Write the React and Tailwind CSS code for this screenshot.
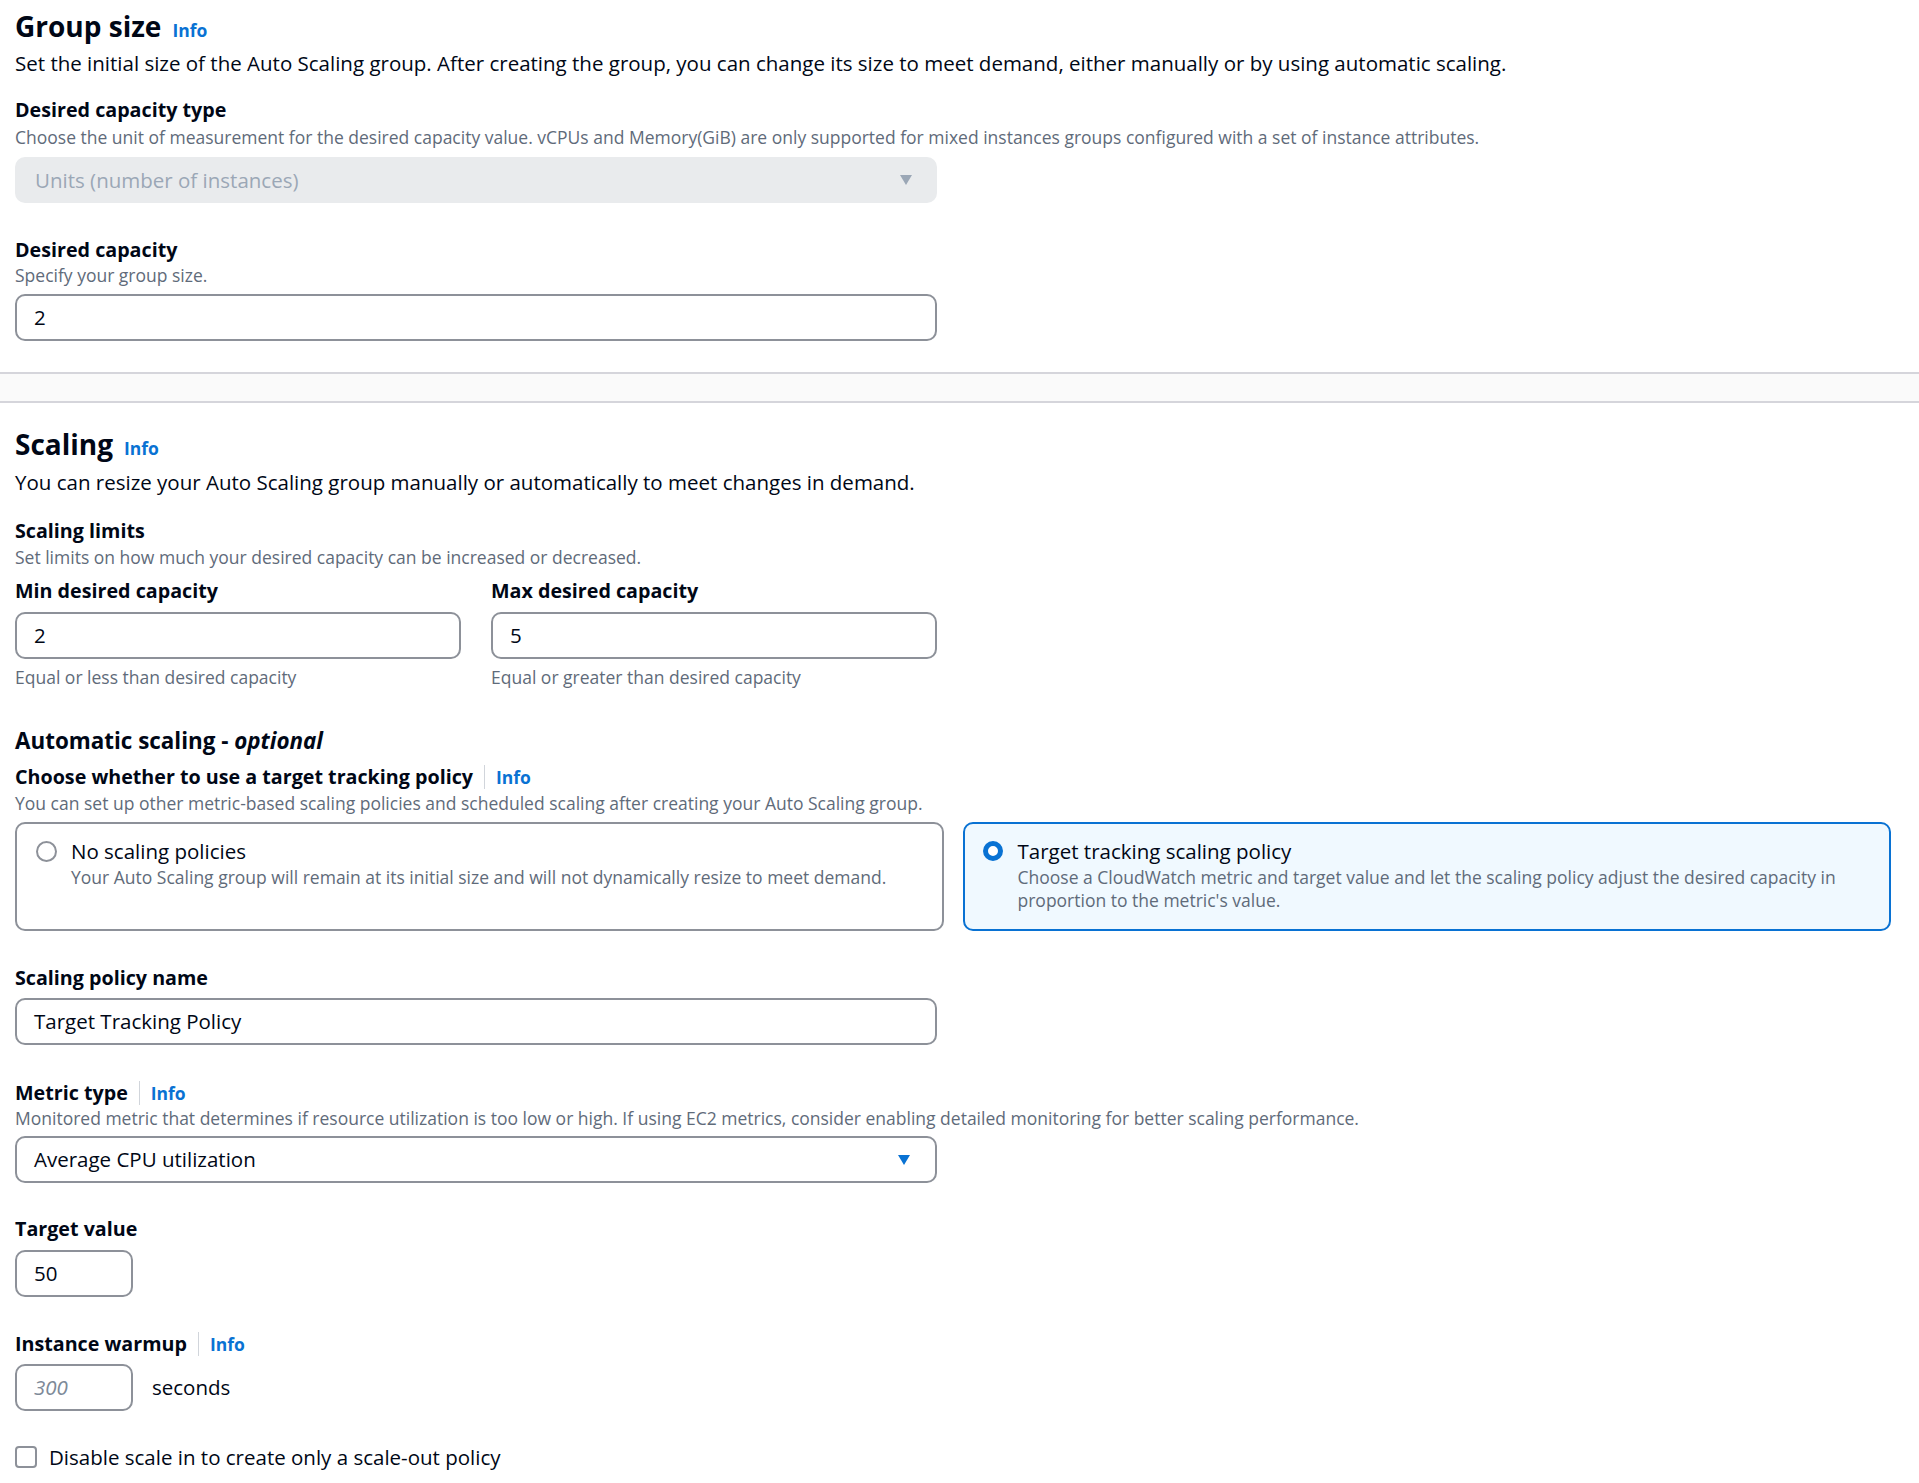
import React from 'react';

const font = { fontFamily: '"Open Sans", "Noto Sans", sans-serif' };

const Info = () => (
    <span className="text-[#0972d3] font-bold text-[17.5px] leading-[22px]">Info</span>
);

const LabelWithInfo = ({ children }) => (
    <div className="flex items-center h-[22px]">
        <span className="text-[19.7px] font-bold leading-[22px] text-[#000716]">{children}</span>
        <span className="mx-[11px] h-[24px] w-px bg-[#d1d5db]" />
        <Info />
    </div>
);

const Label = ({ children }) => (
    <div className="text-[19.7px] font-bold leading-[22px] text-[#000716]">{children}</div>
);

const Hint = ({ children, className = '' }) => (
    <div className={`text-[17.5px] leading-[20px] text-[#5f6b7a] ${className}`}>{children}</div>
);

const TextInput = ({ value, className = 'w-[922px]', placeholder }) => (
    <div className={`${className} h-[47px] flex items-center px-[17px] border-2 border-[#8d9199] rounded-[10px] bg-white text-[20.5px] text-[#000716]`}>
        {placeholder ? <span className="italic text-[#7d8998]">{placeholder}</span> : value}
    </div>
);

const Caret = ({ color }) => (
    <svg width="14" height="12" viewBox="0 0 14 12">
        <path d="M1 1h12L7 11z" fill={color} />
    </svg>
);

const Radio = ({ checked }) =>
    checked ? (
        <span className="w-[20px] h-[20px] rounded-full border-[5px] border-[#0972d3] bg-white shrink-0" />
    ) : (
        <span className="w-[21px] h-[21px] rounded-full border-2 border-[#8d9199] bg-white shrink-0" />
    );

export default function App() {
    return (
        <div className="bg-white min-h-screen text-[#000716]" style={font}>
            {/* Group size */}
            <section className="px-[15px] pt-[11px] pb-[31px]">
                <div className="flex items-baseline gap-[11px] h-[30px]">
                    <h2 className="text-[28px] font-bold leading-[30px]">Group size</h2>
                    <Info />
                </div>
                <p className="mt-[10px] text-[20.5px] leading-[24px] text-[#000716]">
                    Set the initial size of the Auto Scaling group. After creating the group, you can change its size to meet demand, either manually or by using automatic scaling.
                </p>

                <div className="mt-[24px]">
                    <Label>Desired capacity type</Label>
                    <Hint className="mt-[6px]">
                        Choose the unit of measurement for the desired capacity value. vCPUs and Memory(GiB) are only supported for mixed instances groups configured with a set of instance attributes.
                    </Hint>
                    <div className="mt-[10px] w-[922px] h-[46px] flex items-center justify-between pl-[20px] pr-[24px] rounded-[10px] bg-[#e9ebed] text-[20.5px] text-[#9ba7b6]">
                        <span>Units (number of instances)</span>
                        <Caret color="#9ba7b6" />
                    </div>
                </div>

                <div className="mt-[36px]">
                    <Label>Desired capacity</Label>
                    <Hint className="mt-[4px]">Specify your group size.</Hint>
                    <div className="mt-[9px]">
                        <TextInput value="2" />
                    </div>
                </div>
            </section>

            <div className="h-[31px] bg-[#fafafa] border-y-2 border-[#d5d5db]" />

            {/* Scaling */}
            <section className="px-[15px] pt-[26px] pb-[20px]">
                <div className="flex items-baseline gap-[11px] h-[30px]">
                    <h2 className="text-[28px] font-bold leading-[30px]">Scaling</h2>
                    <Info />
                </div>
                <p className="mt-[11px] text-[20.5px] leading-[24px]">
                    You can resize your Auto Scaling group manually or automatically to meet changes in demand.
                </p>

                <div className="mt-[26px]">
                    <Label>Scaling limits</Label>
                    <Hint className="mt-[5px]">Set limits on how much your desired capacity can be increased or decreased.</Hint>
                    <div className="mt-[13px] grid grid-cols-[446px_446px] gap-x-[30px] w-[922px]">
                        <div>
                            <Label>Min desired capacity</Label>
                            <div className="mt-[10px]">
                                <TextInput value="2" className="w-full" />
                            </div>
                            <Hint className="mt-[8px]">Equal or less than desired capacity</Hint>
                        </div>
                        <div>
                            <Label>Max desired capacity</Label>
                            <div className="mt-[10px]">
                                <TextInput value="5" className="w-full" />
                            </div>
                            <Hint className="mt-[8px]">Equal or greater than desired capacity</Hint>
                        </div>
                    </div>
                </div>

                <div className="mt-[42px]">
                    <h3 className="text-[22.4px] font-bold leading-[24px]">
                        Automatic scaling - <i>optional</i>
                    </h3>
                    <div className="mt-[13px]">
                        <LabelWithInfo>Choose whether to use a target tracking policy</LabelWithInfo>
                    </div>
                    <Hint className="mt-[5px]">
                        You can set up other metric-based scaling policies and scheduled scaling after creating your Auto Scaling group.
                    </Hint>
                    <div className="mt-[9px] grid grid-cols-2 gap-[19px] w-[1876px]">
                        <div className="h-[109px] border-2 border-[#8d9199] rounded-[10px] pt-[15px] pl-[19px] pr-[20px] flex gap-[14px]">
                            <div className="h-[24px] flex items-center">
                                <Radio checked={false} />
                            </div>
                            <div>
                                <div className="text-[20.5px] leading-[24px]">No scaling policies</div>
                                <div className="mt-[3px] text-[17.5px] leading-[23px] text-[#5f6b7a]">
                                    Your Auto Scaling group will remain at its initial size and will not dynamically resize to meet demand.
                                </div>
                            </div>
                        </div>
                        <div className="h-[109px] border-2 border-[#0972d3] bg-[#f0f9ff] rounded-[10px] pt-[15px] pl-[18px] pr-[20px] flex gap-[15px]">
                            <div className="h-[24px] flex items-center">
                                <Radio checked />
                            </div>
                            <div>
                                <div className="text-[20.5px] leading-[24px]">Target tracking scaling policy</div>
                                <div className="mt-[3px] text-[17.5px] leading-[23px] text-[#5f6b7a]">
                                    Choose a CloudWatch metric and target value and let the scaling policy adjust the desired capacity in proportion to the metric's value.
                                </div>
                            </div>
                        </div>
                    </div>
                </div>

                <div className="mt-[36px]">
                    <Label>Scaling policy name</Label>
                    <div className="mt-[9px]">
                        <TextInput value="Target Tracking Policy" />
                    </div>
                </div>

                <div className="mt-[37px]">
                    <LabelWithInfo>Metric type</LabelWithInfo>
                    <Hint className="mt-[4px]">
                        Monitored metric that determines if resource utilization is too low or high. If using EC2 metrics, consider enabling detailed monitoring for better scaling performance.
                    </Hint>
                    <div className="mt-[8px] w-[922px] h-[47px] flex items-center justify-between pl-[17px] pr-[24px] border-2 border-[#8d9199] rounded-[10px] text-[20.5px]">
                        <span>Average CPU utilization</span>
                        <Caret color="#0972d3" />
                    </div>
                </div>

                <div className="mt-[35px]">
                    <Label>Target value</Label>
                    <div className="mt-[10px]">
                        <TextInput value="50" className="w-[118px]" />
                    </div>
                </div>

                <div className="mt-[36px]">
                    <LabelWithInfo>Instance warmup</LabelWithInfo>
                    <div className="mt-[9px] flex items-center gap-[19px]">
                        <TextInput placeholder="300" className="w-[118px]" />
                        <span className="text-[20.5px]">seconds</span>
                    </div>
                </div>

                <label className="mt-[34px] flex items-center gap-[12px] h-[24px]">
                    <span className="w-[22px] h-[22px] border-2 border-[#8d9199] rounded-[4px] bg-white" />
                    <span className="text-[20.5px] leading-[24px]">Disable scale in to create only a scale-out policy</span>
                </label>
            </section>
        </div>
    );
}
